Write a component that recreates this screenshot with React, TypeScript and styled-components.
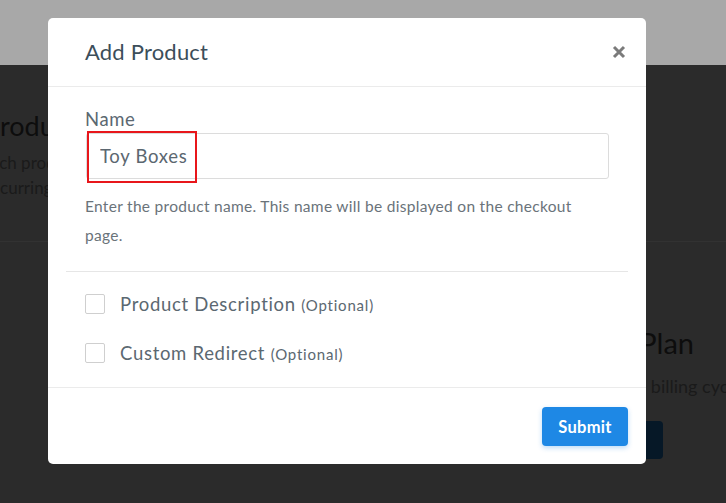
import React from "react";
import styled, { createGlobalStyle } from "styled-components";

const Global = createGlobalStyle`
  html, body { margin: 0; padding: 0; }
  body {
    width: 726px; height: 503px; overflow: hidden;
    font-family: Lato, "Noto Sans", sans-serif;
    background: #2b2b2b;
  }
  * { box-sizing: border-box; }
`;

const Page = styled.div`
  position: relative;
  width: 726px;
  height: 503px;
  overflow: hidden;
  background: #2b2b2b;
`;

const TopBand = styled.header`
  height: 65px;
  background: #a8a8a8;
`;

const Content = styled.div`
  display: grid;
  grid-template-columns: 446px 280px;
  overflow: hidden;
`;

const LeftPanel = styled.section`
  margin-left: -16px;
  padding-top: 44px;
  padding-bottom: 41px;
  white-space: nowrap;
`;

const PanelTitle = styled.h2`
  margin: 0;
  font-size: 27px;
  font-weight: 400;
  color: #0d0d0d;
  line-height: 34px;
`;

const PanelText = styled.p`
  margin: 0;
  font-size: 17px;
  line-height: 25px;
  color: #1a1a1a;
`;

const LeftText = styled(PanelText)`
  margin-top: 7px;
  margin-left: -3px;
`;

const Divider = styled.div`
  grid-column: 1 / span 2;
  height: 1px;
  background: #323232;
`;

const RightPanel = styled.section`
  padding-top: 84px;
  white-space: nowrap;
  overflow: hidden;
`;

const RightTitle = styled(PanelTitle)`
  font-size: 29px;
  text-align: right;
  padding-right: 32px;
`;

const RightText = styled(PanelText)`
  margin-top: 14px;
  padding-left: 144px;
  font-size: 18px;
`;

const DarkButton = styled.div`
  margin-top: 22px;
  margin-left: 80px;
  width: 137px;
  height: 38px;
  border-radius: 4px;
  background: #061827;
`;

const Overlay = styled.div`
  position: absolute;
  inset: 0;
`;

const Modal = styled.div`
  position: absolute;
  left: 48px;
  top: 18px;
  width: 598px;
  height: 446px;
  background: #fff;
  border-radius: 5px;
  display: flex;
  flex-direction: column;
`;

const ModalHeader = styled.div`
  height: 69px;
  flex: none;
  display: flex;
  align-items: center;
  justify-content: space-between;
  padding: 0 20px 0 37px;
  border-bottom: 1px solid #ebebeb;
`;

const ModalTitle = styled.h1`
  margin: 0 0 2px;
  font-size: 22px;
  font-weight: 400;
  color: #3c4e5a;
  letter-spacing: 0.2px;
`;

const CloseButton = styled.button`
  border: 0;
  background: none;
  padding: 0;
  width: 14px;
  height: 14px;
  margin-top: -1px;
  display: flex;
  cursor: pointer;
`;

const Body = styled.div`
  padding: 21px 37px 0;
`;

const Label = styled.label`
  display: block;
  font-size: 18.5px;
  letter-spacing: 0.6px;
  line-height: 22px;
  color: #5b6871;
`;

const InputWrap = styled.div`
  position: relative;
  margin-top: 3px;
  margin-left: 1px;
  width: 523px;
`;

const Input = styled.input`
  display: block;
  width: 100%;
  height: 46px;
  border: 1px solid #dcdcdc;
  border-radius: 3px;
  padding: 0 13px;
  font-family: Lato, "Noto Sans", sans-serif;
  font-size: 18.5px;
  letter-spacing: 0.7px;
  color: #5b6770;
  outline: none;
`;

const Highlight = styled.div`
  position: absolute;
  left: 1px;
  top: -2px;
  width: 110px;
  height: 52px;
  border: 2px solid #e8161b;
  pointer-events: none;
`;

const Help = styled.p`
  margin: 13px 0 0;
  width: 526px;
  font-size: 15.5px;
  letter-spacing: 0.3px;
  line-height: 29px;
  color: #6a737a;
`;

const InsetDivider = styled.div`
  height: 1px;
  flex: none;
  margin: 21px 18px 0;
  background: #e6e6e6;
`;

const Options = styled.div`
  padding: 7px 37px 10px;
`;

const OptionRow = styled.label`
  height: 49px;
  display: flex;
  align-items: center;
  gap: 15px;
  cursor: pointer;
`;

const Box = styled.span`
  width: 20px;
  height: 20px;
  border: 1.5px solid #cfcfcf;
  border-radius: 2px;
  background: #fff;
  flex: none;
`;

const OptionText = styled.span`
  font-size: 18.5px;
  letter-spacing: 0.7px;
  color: #5b6871;
`;

const Optional = styled.span`
  font-size: 15px;
  letter-spacing: 0.8px;
  color: #5b6871;
`;

const Footer = styled.div`
  margin-top: auto;
  border-top: 1px solid #ebebeb;
  padding: 19px 18px 18px;
  display: flex;
  justify-content: flex-end;
`;

const Submit = styled.button`
  width: 86px;
  height: 39px;
  border: 0;
  border-radius: 4px;
  background: #1e88e5;
  color: #fff;
  font-family: Lato, "Noto Sans", sans-serif;
  font-size: 16.5px;
  font-weight: 700;
  letter-spacing: 0.3px;
  box-shadow: 0 2px 5px rgba(30, 136, 229, 0.3);
  cursor: pointer;
`;

export default function App() {
  return (
    <>
      <Global />
      <Page>
        <TopBand />
        <Content>
          <LeftPanel>
            <PanelTitle>Products</PanelTitle>
            <LeftText>
              Each product can be a one-time payment
              <br />
              Recurring subscription.
            </LeftText>
          </LeftPanel>
          <div />
          <Divider />
          <div />
          <RightPanel>
            <RightTitle>Recurring Plan</RightTitle>
            <RightText>Set the billing cycle</RightText>
            <DarkButton />
          </RightPanel>
        </Content>
        <Overlay>
          <Modal role="dialog" aria-label="Add Product">
            <ModalHeader>
              <ModalTitle>Add Product</ModalTitle>
              <CloseButton aria-label="Close">
                <svg width="14" height="14" viewBox="0 0 14 14">
                  <path d="M2 2 L12 12 M12 2 L2 12" stroke="#7b7b7b" strokeWidth="3" strokeLinecap="butt" />
                </svg>
              </CloseButton>
            </ModalHeader>
            <Body>
              <Label htmlFor="pname">Name</Label>
              <InputWrap>
                <Input id="pname" defaultValue="Toy Boxes" />
                <Highlight />
              </InputWrap>
              <Help>
                Enter the product name. This name will be displayed on the checkout page.
              </Help>
            </Body>
            <InsetDivider />
            <Options>
              <OptionRow>
                <Box />
                <OptionText>
                  Product Description <Optional>(Optional)</Optional>
                </OptionText>
              </OptionRow>
              <OptionRow>
                <Box />
                <OptionText>
                  Custom Redirect <Optional>(Optional)</Optional>
                </OptionText>
              </OptionRow>
            </Options>
            <Footer>
              <Submit>Submit</Submit>
            </Footer>
          </Modal>
        </Overlay>
      </Page>
    </>
  );
}
